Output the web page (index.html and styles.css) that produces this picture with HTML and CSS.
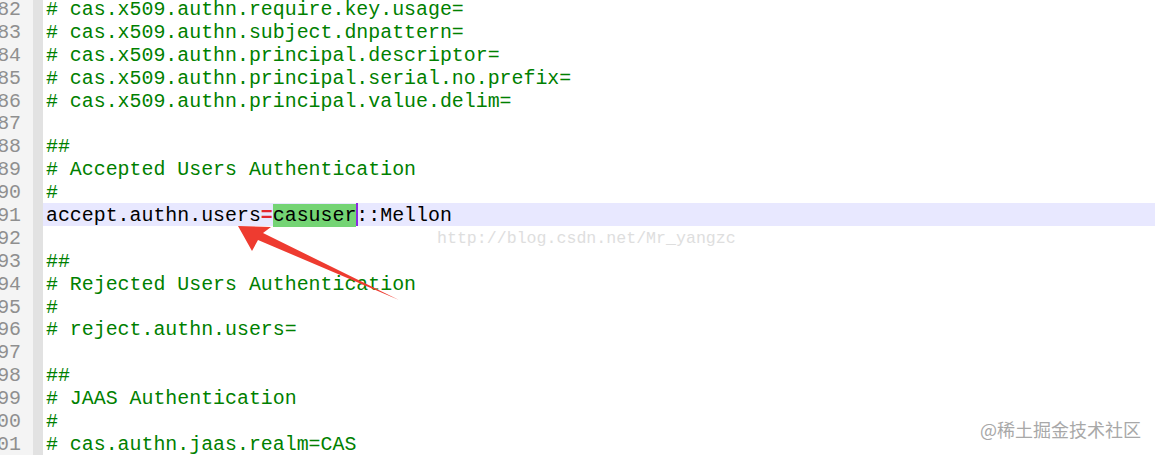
FILE: index.html
```html
<!DOCTYPE html>
<html lang="en">
<head>
    <meta charset="UTF-8">
    <title>cas.properties</title>
    <link rel="stylesheet" href="styles.css">
</head>
<body>
    <div class="editor">
        <div class="row"><span class="num">82</span><span class="fold"></span><span class="code comment"># cas.x509.authn.require.key.usage=</span></div>
        <div class="row"><span class="num">83</span><span class="fold"></span><span class="code comment"># cas.x509.authn.subject.dnpattern=</span></div>
        <div class="row"><span class="num">84</span><span class="fold"></span><span class="code comment"># cas.x509.authn.principal.descriptor=</span></div>
        <div class="row"><span class="num">85</span><span class="fold"></span><span class="code comment"># cas.x509.authn.principal.serial.no.prefix=</span></div>
        <div class="row"><span class="num">86</span><span class="fold"></span><span class="code comment"># cas.x509.authn.principal.value.delim=</span></div>
        <div class="row"><span class="num">87</span><span class="fold"></span><span class="code"></span></div>
        <div class="row"><span class="num">88</span><span class="fold"></span><span class="code comment">##</span></div>
        <div class="row"><span class="num">89</span><span class="fold"></span><span class="code comment"># Accepted Users Authentication</span></div>
        <div class="row"><span class="num">90</span><span class="fold"></span><span class="code comment">#</span></div>
        <div class="row"><span class="num">91</span><span class="fold"></span><span class="code current">accept.authn.users<span class="op">=</span><span class="sel">casuser</span><span class="caret"></span>::Mellon</span></div>
        <div class="row"><span class="num">92</span><span class="fold"></span><span class="code"></span></div>
        <div class="row"><span class="num">93</span><span class="fold"></span><span class="code comment">##</span></div>
        <div class="row"><span class="num">94</span><span class="fold"></span><span class="code comment"># Rejected Users Authentication</span></div>
        <div class="row"><span class="num">95</span><span class="fold"></span><span class="code comment">#</span></div>
        <div class="row"><span class="num">96</span><span class="fold"></span><span class="code comment"># reject.authn.users=</span></div>
        <div class="row"><span class="num">97</span><span class="fold"></span><span class="code"></span></div>
        <div class="row"><span class="num">98</span><span class="fold"></span><span class="code comment">##</span></div>
        <div class="row"><span class="num">99</span><span class="fold"></span><span class="code comment"># JAAS Authentication</span></div>
        <div class="row"><span class="num">100</span><span class="fold"></span><span class="code comment">#</span></div>
        <div class="row"><span class="num">101</span><span class="fold"></span><span class="code comment"># cas.authn.jaas.realm=CAS</span></div>
    </div>

    <!-- overlays added on top of the screenshot -->
    <div class="blog-mark">http://blog.csdn.net/Mr_yangzc</div>
    <svg class="arrow" width="1155" height="455" viewBox="0 0 1155 455">
        <path d="M238 226 L271 227 L263 233 L399 300 L258 240 L252 251 Z" fill="#ee3b30"/>
    </svg>
    <div class="site-mark">@稀土掘金技术社区</div>
</body>
</html>
```

FILE: styles.css
```css
body {
    margin: 0;
    background: #ffffff;
    overflow: hidden;
}

.editor {
    margin-top: -3px;
    font-family: 'Liberation Mono', 'Courier New', monospace;
    font-size: 19.9px;
}

.row {
    display: flex;
    height: 22.9px;
    line-height: 22.9px;
}

.num {
    flex: 0 0 33px;
    box-sizing: border-box;
    padding-top: 2px;
    padding-right: 12px;
    background: #f4f4f4;
    color: #8f8f8f;
    direction: rtl;
    overflow: hidden;
    white-space: nowrap;
}

.fold {
    flex: 0 0 10px;
    background: #e2e2e2;
}

.code {
    flex: 1;
    box-sizing: border-box;
    padding-top: 2px;
    padding-left: 3px;
    color: #000000;
    white-space: pre;
}

.comment {
    color: #008000;
}

.current {
    background: #e8e8ff;
}

.op {
    color: #e2262f;
    font-weight: bold;
}

.sel {
    background: #74d474;
}

.caret {
    display: inline-block;
    width: 2px;
    height: 22.9px;
    margin-top: -2px;
    margin-right: -2px;
    vertical-align: top;
    background: #8a2be2;
}

.blog-mark {
    position: absolute;
    left: 437px;
    top: 229px;
    font-family: 'Liberation Mono', monospace;
    font-size: 16.6px;
    color: #dedede;
}

.arrow {
    position: absolute;
    left: 0;
    top: 0;
}

.site-mark {
    position: absolute;
    left: 980px;
    top: 416px;
    font-family: 'Noto Sans CJK SC', sans-serif;
    font-size: 18px;
    color: #a8a8a8;
}
```
